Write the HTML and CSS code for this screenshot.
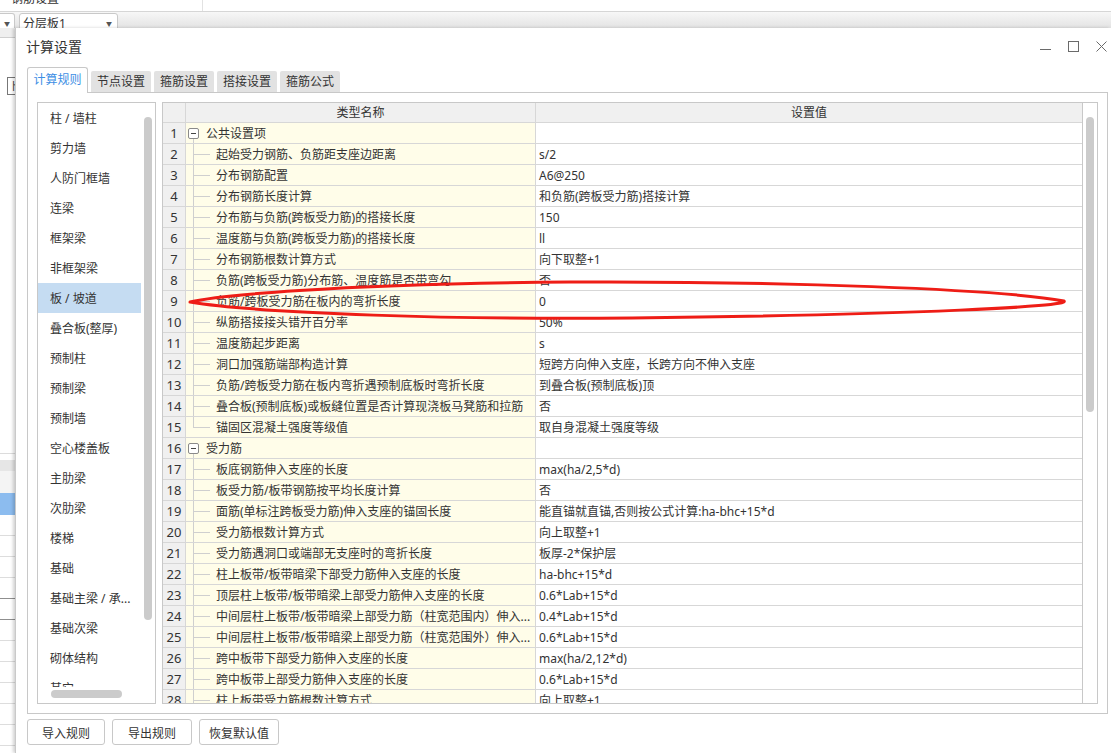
FILE: index.html
```html
<!DOCTYPE html>
<html lang="zh-CN">
<head>
<meta charset="utf-8">
<title>计算设置</title>
<link rel="stylesheet" href="styles.css">
</head>
<body>
<div class="bg-top">
  <div class="bg-title-cell"><span class="bg-title">钢筋设置</span></div>
</div>
<div class="bg-toolbar">
  <div class="combo small"><span class="arr">▼</span></div>
  <div class="combo layer"><span>分层板1</span><span class="arr">▼</span></div>
</div>
<div class="bg-main">
  <div class="bg-left">
    <div class="bl-head"></div>
    <div class="bl-a"></div>
    <div class="bl-icon"><span class="bl-iconbox">卜</span></div>
    <div class="bl-b"></div>
    <div class="bl-line"></div>
    <div class="bl-band"></div>
    <div class="bl-c"></div>
    <div class="bl-sel"></div>
    <div class="bl-row"></div>
    <div class="bl-row"></div>
    <div class="bl-row"></div>
    <div class="bl-row dark"></div>
    <div class="bl-row dark"></div>
    <div class="bl-row"></div>
    <div class="bl-row"></div>
    <div class="bl-row"></div>
    <div class="bl-row"></div>
    <div class="bl-row"></div>
    <div class="bl-row"></div>
  </div>

  <div class="dialog">
    <div class="dlg-title">
      <span class="dlg-name">计算设置</span>
      <div class="win-ctrls">
        <svg class="wc" viewBox="0 0 11 11" width="11" height="11"><line x1="0" y1="8.5" x2="11" y2="8.5"/></svg>
        <svg class="wc" viewBox="0 0 11 11" width="11" height="11"><rect x="0.5" y="0.5" width="10" height="10"/></svg>
        <svg class="wc" viewBox="0 0 11 11" width="11" height="11"><line x1="0.5" y1="0.5" x2="10.5" y2="10.5"/><line x1="10.5" y1="0.5" x2="0.5" y2="10.5"/></svg>
      </div>
    </div>

    <div class="dlg-body">
      <div class="tabs">
        <div class="tab active">计算规则</div>
        <div class="tab">节点设置</div>
        <div class="tab">箍筋设置</div>
        <div class="tab">搭接设置</div>
        <div class="tab">箍筋公式</div>
      </div>

      <div class="panel">
        <div class="list">
          <div class="list-items">
            <div class="item">柱 / 墙柱</div>
            <div class="item">剪力墙</div>
            <div class="item">人防门框墙</div>
            <div class="item">连梁</div>
            <div class="item">框架梁</div>
            <div class="item">非框架梁</div>
            <div class="item sel">板 / 坡道</div>
            <div class="item">叠合板(整厚)</div>
            <div class="item">预制柱</div>
            <div class="item">预制梁</div>
            <div class="item">预制墙</div>
            <div class="item">空心楼盖板</div>
            <div class="item">主肋梁</div>
            <div class="item">次肋梁</div>
            <div class="item">楼梯</div>
            <div class="item">基础</div>
            <div class="item">基础主梁 / 承...</div>
            <div class="item">基础次梁</div>
            <div class="item">砌体结构</div>
            <div class="item">其它</div>
          </div>
          <div class="list-vs"><div class="thumb-v"></div></div>
          <div class="list-hs"><div class="thumb-h"></div></div>
          <div class="list-corner"></div>
        </div>

        <div class="tbl">
          <div class="grid">
            <div class="head">
              <div class="num"></div>
              <div class="name hname">类型名称</div>
              <div class="val hval">设置值</div>
            </div>
            <div class="row"><div class="num">1</div><div class="name"><span class="tog"></span><span class="txt">公共设置项</span></div><div class="val"></div></div>
            <div class="row"><div class="num">2</div><div class="name"><span class="guide"></span><span class="txt">起始受力钢筋、负筋距支座边距离</span></div><div class="val">s/2</div></div>
            <div class="row"><div class="num">3</div><div class="name"><span class="guide"></span><span class="txt">分布钢筋配置</span></div><div class="val">A6@250</div></div>
            <div class="row"><div class="num">4</div><div class="name"><span class="guide"></span><span class="txt">分布钢筋长度计算</span></div><div class="val">和负筋(跨板受力筋)搭接计算</div></div>
            <div class="row"><div class="num">5</div><div class="name"><span class="guide"></span><span class="txt">分布筋与负筋(跨板受力筋)的搭接长度</span></div><div class="val">150</div></div>
            <div class="row"><div class="num">6</div><div class="name"><span class="guide"></span><span class="txt">温度筋与负筋(跨板受力筋)的搭接长度</span></div><div class="val">ll</div></div>
            <div class="row"><div class="num">7</div><div class="name"><span class="guide"></span><span class="txt">分布钢筋根数计算方式</span></div><div class="val">向下取整+1</div></div>
            <div class="row"><div class="num">8</div><div class="name"><span class="guide"></span><span class="txt">负筋(跨板受力筋)分布筋、温度筋是否带弯勾</span></div><div class="val">否</div></div>
            <div class="row"><div class="num">9</div><div class="name"><span class="guide"></span><span class="txt">负筋/跨板受力筋在板内的弯折长度</span></div><div class="val">0</div></div>
            <div class="row"><div class="num">10</div><div class="name"><span class="guide"></span><span class="txt">纵筋搭接接头错开百分率</span></div><div class="val">50%</div></div>
            <div class="row"><div class="num">11</div><div class="name"><span class="guide"></span><span class="txt">温度筋起步距离</span></div><div class="val">s</div></div>
            <div class="row"><div class="num">12</div><div class="name"><span class="guide"></span><span class="txt">洞口加强筋端部构造计算</span></div><div class="val">短跨方向伸入支座，长跨方向不伸入支座</div></div>
            <div class="row"><div class="num">13</div><div class="name"><span class="guide"></span><span class="txt">负筋/跨板受力筋在板内弯折遇预制底板时弯折长度</span></div><div class="val">到叠合板(预制底板)顶</div></div>
            <div class="row"><div class="num">14</div><div class="name"><span class="guide"></span><span class="txt">叠合板(预制底板)或板缝位置是否计算现浇板马凳筋和拉筋</span></div><div class="val">否</div></div>
            <div class="row"><div class="num">15</div><div class="name"><span class="guide end"></span><span class="txt">锚固区混凝土强度等级值</span></div><div class="val">取自身混凝土强度等级</div></div>
            <div class="row"><div class="num">16</div><div class="name"><span class="tog"></span><span class="txt">受力筋</span></div><div class="val"></div></div>
            <div class="row"><div class="num">17</div><div class="name"><span class="guide"></span><span class="txt">板底钢筋伸入支座的长度</span></div><div class="val">max(ha/2,5*d)</div></div>
            <div class="row"><div class="num">18</div><div class="name"><span class="guide"></span><span class="txt">板受力筋/板带钢筋按平均长度计算</span></div><div class="val">否</div></div>
            <div class="row"><div class="num">19</div><div class="name"><span class="guide"></span><span class="txt">面筋(单标注跨板受力筋)伸入支座的锚固长度</span></div><div class="val">能直锚就直锚,否则按公式计算:ha-bhc+15*d</div></div>
            <div class="row"><div class="num">20</div><div class="name"><span class="guide"></span><span class="txt">受力筋根数计算方式</span></div><div class="val">向上取整+1</div></div>
            <div class="row"><div class="num">21</div><div class="name"><span class="guide"></span><span class="txt">受力筋遇洞口或端部无支座时的弯折长度</span></div><div class="val">板厚-2*保护层</div></div>
            <div class="row"><div class="num">22</div><div class="name"><span class="guide"></span><span class="txt">柱上板带/板带暗梁下部受力筋伸入支座的长度</span></div><div class="val">ha-bhc+15*d</div></div>
            <div class="row"><div class="num">23</div><div class="name"><span class="guide"></span><span class="txt">顶层柱上板带/板带暗梁上部受力筋伸入支座的长度</span></div><div class="val">0.6*Lab+15*d</div></div>
            <div class="row"><div class="num">24</div><div class="name"><span class="guide"></span><span class="txt">中间层柱上板带/板带暗梁上部受力筋（柱宽范围内）伸入...</span></div><div class="val">0.4*Lab+15*d</div></div>
            <div class="row"><div class="num">25</div><div class="name"><span class="guide"></span><span class="txt">中间层柱上板带/板带暗梁上部受力筋（柱宽范围外）伸入...</span></div><div class="val">0.6*Lab+15*d</div></div>
            <div class="row"><div class="num">26</div><div class="name"><span class="guide"></span><span class="txt">跨中板带下部受力筋伸入支座的长度</span></div><div class="val">max(ha/2,12*d)</div></div>
            <div class="row"><div class="num">27</div><div class="name"><span class="guide"></span><span class="txt">跨中板带上部受力筋伸入支座的长度</span></div><div class="val">0.6*Lab+15*d</div></div>
            <div class="row"><div class="num">28</div><div class="name"><span class="guide"></span><span class="txt">柱上板带受力筋根数计算方式</span></div><div class="val">向上取整+1</div></div>
          </div>
          <div class="tbl-vs"><div class="thumb-v tv"></div></div>
        </div>
      </div>

      <div class="footer">
        <button class="btn b1">导入规则</button>
        <button class="btn b2">导出规则</button>
        <button class="btn b2">恢复默认值</button>
      </div>
    </div>
  </div>
</div>

<svg class="mark" width="1111" height="753" viewBox="0 0 1111 753">
  <path d="M190,302 C215,296 330,284 570,282 C780,281 1000,289 1064,301 C1072,307 900,314 700,317 C450,322 250,312 190,302 Z"/>
</svg>
</body>
</html>
```

FILE: styles.css
```css
* { box-sizing: border-box; }

html, body {
  margin: 0;
  padding: 0;
}

body {
  width: 1111px;
  height: 753px;
  overflow: hidden;
  position: relative;
  background: #fff;
  color: #333;
  font-family: "Noto Sans", "Noto Sans CJK SC", sans-serif;
  font-size: 12px;
}

/* ---------- background application ---------- */
.bg-top {
  height: 12px;
  border-bottom: 1px solid #d6d6d6;
  overflow: hidden;
  display: flex;
}
.bg-title-cell {
  width: 203px;
  border-right: 1px solid #e2e2e2;
  padding-left: 11px;
}
.bg-title {
  display: block;
  margin-top: -9px;
  font-size: 12px;
  line-height: 16px;
  color: #333;
}

.bg-toolbar {
  height: 16px;
  overflow: hidden;
  display: flex;
  gap: 4px;
  padding-top: 1px;
  background: linear-gradient(#f7f7f7, #e3e3e3);
}
.combo {
  height: 22px;
  background: #fff;
  border: 1px solid #c9c9c9;
  border-radius: 3px;
  display: flex;
  align-items: flex-start;
  padding-top: 3px;
  font-size: 12px;
  line-height: 14px;
}
.combo.small {
  width: 15px;
  border-left: none;
  border-radius: 0 3px 3px 0;
  justify-content: center;
}
.combo.layer {
  width: 99px;
  padding-left: 3px;
  padding-right: 5px;
  justify-content: space-between;
}
.arr {
  font-size: 6px;
  color: #555;
  line-height: 14px;
}

.bg-main {
  display: flex;
  height: 725px;
}
.bg-left {
  width: 15px;
  flex: none;
  overflow: hidden;
}
.bl-head { height: 10px; background: #efefef; border-bottom: 1px solid #cfcfcf; }
.bl-a { height: 39px; }
.bl-icon { height: 18px; padding-left: 7px; }
.bl-iconbox {
  display: block;
  width: 14px;
  height: 18px;
  border: 1px solid #777;
  border-right: none;
  font-size: 11px;
  line-height: 16px;
  padding-left: 1px;
  overflow: hidden;
  color: #444;
}
.bl-b { height: 358px; }
.bl-line { height: 7px; border-top: 1px solid #dcdcdc; }
.bl-band { height: 11px; background: #e6e6e6; }
.bl-c { height: 22px; background: #f4f4f4; }
.bl-sel { height: 22px; background: #8cbcef; }
.bl-row { height: 21px; border-bottom: 1px solid #dddddd; }
.bl-row.dark { border-bottom-color: #8f8f8f; }

/* ---------- dialog ---------- */
.dialog {
  flex: 1;
  background: #fff;
  border-left: 1px solid #c9c9c9;
  box-shadow: -2px 0 3px rgba(0, 0, 0, 0.18);
  display: flex;
  flex-direction: column;
}

.dlg-title {
  height: 39px;
  display: flex;
  align-items: center;
  justify-content: space-between;
  padding-left: 10px;
  padding-right: 4px;
  padding-bottom: 2px;
}
.dlg-name {
  font-size: 14px;
  line-height: 18px;
  color: #333;
}
.win-ctrls {
  display: flex;
  gap: 17px;
  align-items: center;
}
.wc {
  display: block;
  fill: none;
  stroke: #6a6a6a;
  stroke-width: 1;
}

.dlg-body {
  padding: 0 3px 0 11px;
  display: flex;
  flex-direction: column;
}

.tabs {
  height: 25px;
  display: flex;
  align-items: flex-end;
  gap: 3px;
}
.tab {
  width: 60px;
  height: 21px;
  background: #e2e2e2;
  border-radius: 2px 2px 0 0;
  text-align: center;
  font-size: 12px;
  line-height: 21px;
  color: #333;
}
.tab.active {
  width: 61px;
  height: 26px;
  margin-bottom: -1px;
  position: relative;
  z-index: 1;
  background: #fff;
  border: 1px solid #c8c8c8;
  border-bottom: none;
  border-radius: 3px 3px 0 0;
  color: #3d8ee4;
  line-height: 24px;
}

.panel {
  height: 622px;
  border: 1px solid #c8c8c8;
  padding: 9px;
  display: flex;
  gap: 6px;
}

/* left list */
.list {
  width: 119px;
  flex: none;
  border: 1px solid #c8c8c8;
  display: grid;
  grid-template-columns: 1fr 14px;
  grid-template-rows: 1fr 16px;
  overflow: hidden;
}
.list-items {
  overflow: hidden;
}
.item {
  height: 30px;
  line-height: 29px;
  padding-top: 1px;
  padding-left: 12px;
  font-size: 12px;
  color: #333;
  white-space: nowrap;
  overflow: hidden;
  text-overflow: ellipsis;
}
.item.sel {
  background: #c5dcf2;
  margin-right: -1px;
}
.list-vs {
  padding: 14px 2px 0 3px;
}
.thumb-v {
  width: 8px;
  height: 503px;
  background: #cbcbcb;
  border-radius: 4px;
}
.list-hs {
  padding: 3px 0 0 13px;
}
.thumb-h {
  width: 71px;
  height: 8px;
  background: #cbcbcb;
  border-radius: 4px;
}

/* table */
.tbl {
  flex: 1;
  border: 1px solid #c8c8c8;
  display: flex;
  overflow: hidden;
}
.grid {
  flex: 1;
  border-right: 1px solid #c8c8c8;
  overflow: hidden;
}
.tbl-vs {
  width: 14px;
  flex: none;
  padding: 14px 0 0 3px;
}
.thumb-v.tv {
  height: 295px;
}

.head, .row {
  display: flex;
  border-bottom: 1px solid #d7d7d7;
}
.head {
  height: 20px;
  background: #f0f0f0;
}
.row {
  height: 21px;
}
.num {
  width: 23px;
  flex: none;
  border-right: 1px solid #d7d7d7;
  background: #f0f0f0;
  text-align: center;
  font-size: 13px;
  line-height: 19px;
  padding-top: 1px;
  color: #333;
}
.head .num { padding-top: 0; }
.name {
  width: 350px;
  flex: none;
  border-right: 1px solid #d7d7d7;
  background: #fffde9;
  display: flex;
  align-items: center;
  white-space: nowrap;
  overflow: hidden;
}
.head .name {
  background: #f0f0f0;
  justify-content: center;
  line-height: 19px;
}
.val {
  flex: 1;
  padding-left: 3px;
  padding-top: 1px;
  line-height: 19px;
  font-size: 12px;
  white-space: nowrap;
  overflow: hidden;
}
.head .val {
  text-align: center;
  padding-left: 0;
  padding-top: 0;
  line-height: 19px;
}

.txt {
  line-height: 20px;
  padding-top: 2px;
  overflow: hidden;
  text-overflow: ellipsis;
  white-space: nowrap;
  min-width: 0;
  flex: 1;
  padding-right: 2px;
}

.tog {
  position: relative;
  flex: none;
  width: 11px;
  height: 11px;
  margin-left: 2px;
  margin-right: 7px;
  border: 1px solid #8a8a8a;
  border-radius: 2px;
  background: #fff;
}
.tog::before {
  content: "";
  position: absolute;
  left: 2px;
  top: 4px;
  width: 5px;
  height: 1px;
  background: #444;
}
.tog::after {
  content: "";
  position: absolute;
  left: 4px;
  top: 10px;
  height: 6px;
  border-left: 1px solid #cfcfcf;
}

.guide {
  position: relative;
  flex: none;
  width: 30px;
  align-self: stretch;
}
.guide::before {
  content: "";
  position: absolute;
  left: 7px;
  top: 0;
  height: calc(100% + 1px);
  border-left: 1px solid #cfcfcf;
}
.guide.end::before {
  height: 50%;
}
.guide::after {
  content: "";
  position: absolute;
  left: 7px;
  top: 50%;
  width: 17px;
  border-top: 1px solid #cfcfcf;
}

/* footer buttons */
.footer {
  display: flex;
  gap: 7px;
  margin-top: 5px;
}
.btn {
  height: 26px;
  background: #fff;
  border: 1px solid #c8c8c8;
  border-radius: 3px;
  font-family: "Noto Sans", "Noto Sans CJK SC", sans-serif;
  font-size: 12px;
  color: #333;
  padding: 2px 0 0 0;
}
.btn.b1 { width: 78px; }
.btn.b2 { width: 80px; }

/* red hand-drawn annotation */
.mark {
  position: absolute;
  left: 0;
  top: 0;
  pointer-events: none;
}
.mark path {
  fill: none;
  stroke: #ee1d16;
  stroke-width: 3;
  stroke-linejoin: round;
}
```
